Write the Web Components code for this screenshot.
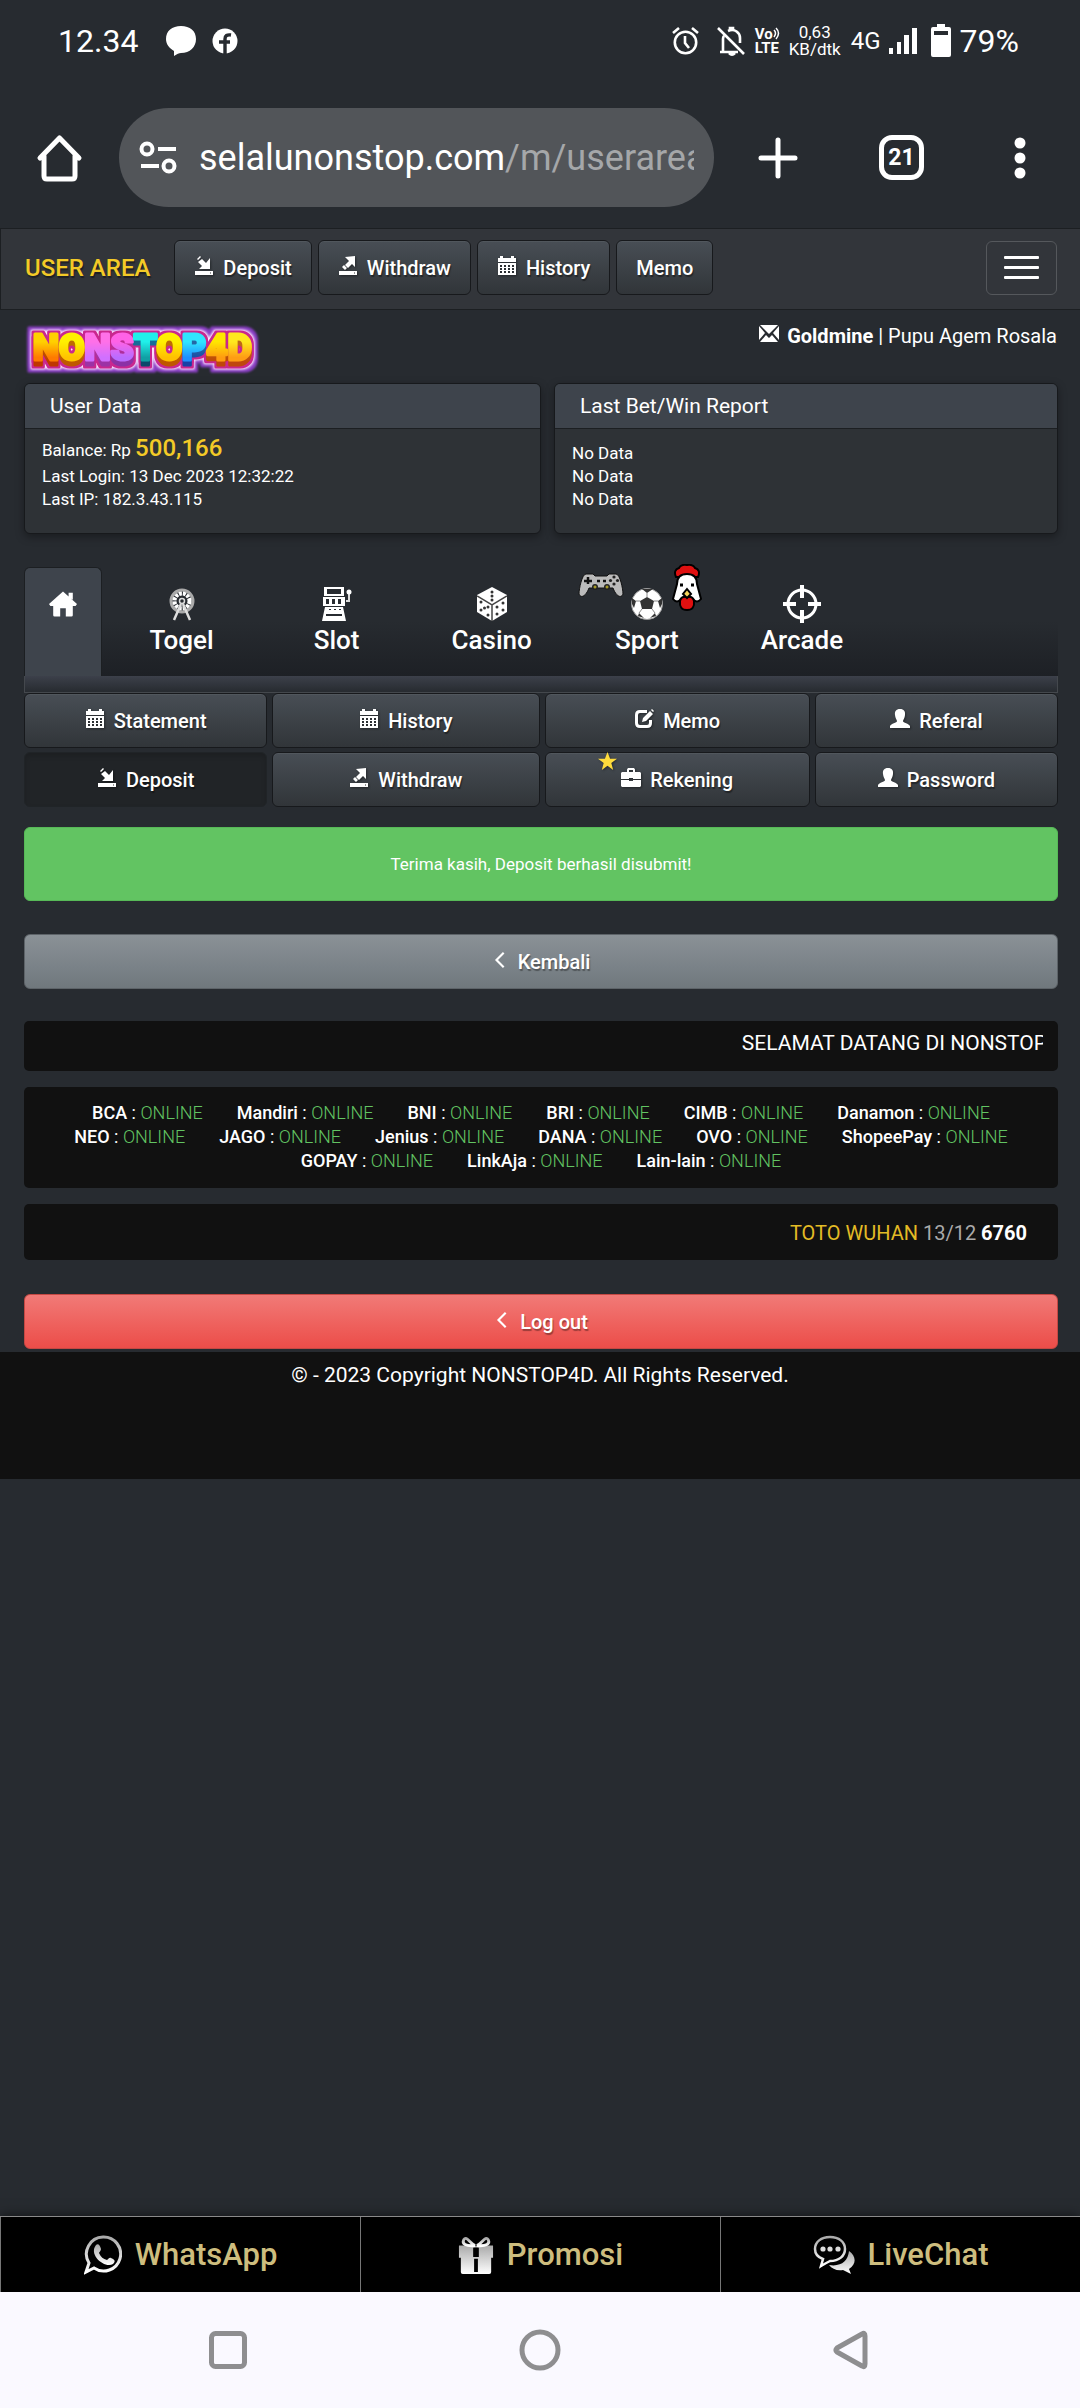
<!DOCTYPE html>
<html lang="id">
<head>
<meta charset="utf-8">
<meta name="viewport" content="width=device-width, initial-scale=1">
<title>User Area</title>
<style>
  body {
    margin: 0;
    min-height: 100vh;
    display: flex;
    flex-direction: column;
    background: #272b30;
    color: #fff;
    font-family: Roboto, "Liberation Sans", sans-serif;
    font-size: 20px;
    line-height: 24px;
  }
  main {
    flex: 1;
    display: block;
  }
  .content {
    padding: 0 22px 3px 24px;
  }
  .cards {
    display: grid;
    grid-template-columns: 517fr 504fr;
    gap: 13px;
    margin-bottom: 33px;
  }
  .cards p {
    margin: 0;
  }
  .cards .balance {
    line-height: 30px;
  }
  .balance strong {
    color: #f3ca27;
    font-size: 24px;
    font-weight: 500;
  }
  .cards .report {
    margin-top: 9px;
  }
  .actions {
    display: grid;
    grid-template-columns: 243fr 267fr 265fr 243fr;
    gap: 4px 5px;
    margin-bottom: 20px;
  }
</style>
</head>
<body>
  <status-bar></status-bar>
  <browser-bar></browser-bar>
  <main>
    <user-navbar></user-navbar>
    <user-heading level="Goldmine" name="Pupu Agem Rosala"></user-heading>
    <div class="content">
      <section class="cards">
        <data-card heading="User Data">
          <p class="balance">Balance: Rp <strong>500,166</strong></p>
          <p>Last Login: 13 Dec 2023 12:32:22</p>
          <p>Last IP: 182.3.43.115</p>
        </data-card>
        <data-card heading="Last Bet/Win Report">
          <p class="report">No Data</p>
          <p>No Data</p>
          <p>No Data</p>
        </data-card>
      </section>
      <game-tabs></game-tabs>
      <nav class="actions">
        <action-button icon="calendar">Statement</action-button>
        <action-button icon="calendar">History</action-button>
        <action-button icon="edit">Memo</action-button>
        <action-button icon="user">Referal</action-button>
        <action-button icon="save" active>Deposit</action-button>
        <action-button icon="open">Withdraw</action-button>
        <action-button icon="briefcase" starred>Rekening</action-button>
        <action-button icon="user">Password</action-button>
      </nav>
      <alert-box>Terima kasih, Deposit berhasil disubmit!</alert-box>
      <wide-button>Kembali</wide-button>
      <news-ticker>SELAMAT DATANG DI NONSTOP</news-ticker>
      <bank-status></bank-status>
      <draw-result market="TOTO WUHAN" date="13/12" number="6760"></draw-result>
      <wide-button kind="danger">Log out</wide-button>
    </div>
    <page-footer>© - 2023 Copyright NONSTOP4D. All Rights Reserved.</page-footer>
  </main>
  <contact-bar></contact-bar>
  <system-nav></system-nav>

<script>
const icons = {
  save: '<path d="M1 15h18v4H1zM16 2v11H5l3-3-4-4 4-3 4 4zM3 3l3-3 1 1-3 3z"/><path d="M16 17h1" stroke="#333" stroke-width="1"/>',
  open: '<path d="M1 15h18v4H1zM17 0v11l-3-3-4 4-3-3 4-4-4-4zM4 11l2-2 3 3-2 2z"/><path d="M16 17h1" stroke="#333" stroke-width="1"/>',
  calendar: '<path fill-rule="evenodd" d="M1 2h2V0h3v2h8V0h3v2h2v4H1zM1 7h18v12H1zM3 9v2h2V9zm4 0v2h2V9zm4 0v2h2V9zm4 0v2h2V9zM3 12v2h2v-2zm4 0v2h2v-2zm4 0v2h2v-2zm4 0v2h2v-2zM3 15v2h2v-2zm4 0v2h2v-2zm4 0v2h2v-2zm4 0v2h2v-2z"/>',
  edit: '<path d="M13 2.500H6Q2.500 2.500 2.500 6v8q0 3.500 3.500 3.500h7q3.500 0 3.500-3.500v-3" fill="none" stroke="currentColor" stroke-width="3"/><path d="m8 13 1-4 7-7 3 3-7 7zM17 1l1-1 2 2-1 1z"/>',
  user: '<path d="M10 0c4 0 5.500 2.500 5 6-.3 3-1.500 4-2 6 0 2 6 2.500 7 5v2H0v-2c1-2.500 7-3 7-5-.5-2-1.700-3-2-6C4.500 2.500 6 0 10 0z"/>',
  briefcase: '<path fill-rule="evenodd" d="M6 4V1.500L7 0h6l1 1.500V4h5l1 1v6h-8v-1H8v1H0V5l1-1zM8 4h4V2H8zM0 12h8v1h4v-1h8v6l-1 1H1l-1-1z"/>',
  mail: '<path d="M1 1h18l-9 9zM0 2l6 7-6 7zM20 2v14l-6-7zM1 18l6-7 3 3 3-3 6 7z"/>',
  home: '<path d="M10 1 20 10l-1 1.500h-2V18q0 1-1 1h-4v-6H8v6H4q-1 0-1-1v-6.500H1L0 10zM14 2h3v5l-3-2z"/>',
  chevron: '<path d="m13 2-8 8 8 8" fill="none" stroke="currentColor" stroke-width="2.400"/>',
  star: '<path fill="#ffdc3c" d="m10 0 2.700 7H20l-6 4.600L16 19l-6-4.400L4 19l2-7.400L0 7h7.300z"/>',
};

const svg = (name, size) => `<svg width="${size}" height="${size}" viewBox="0 0 20 20" fill="currentColor" aria-hidden="true">${icons[name]}</svg>`;

function render(element, html) {
  const template = document.createElement('template');
  template.innerHTML = html;
  element.attachShadow({ mode: 'open' });
  element.shadowRoot.appendChild(template.content.cloneNode(true));
}

class StatusBar extends HTMLElement {
  constructor() {
    super();
    render(this, `
      <style>
        :host {
          display: flex;
          align-items: center;
          height: 82px;
          padding: 0 61px 0 58px;
          font-size: 32px;
          line-height: 40px;
        }
        .time { margin-right: 28px; }
        .chat { margin-right: 16px; }
        .right {
          margin-left: auto;
          display: flex;
          align-items: center;
        }
        .alarm { margin-right: 18px; }
        .bell { margin-right: 10px; }
        .lte, .speed {
          font-size: 15px;
          line-height: 14px;
          font-weight: 700;
        }
        .lte { margin-right: 9px; }
        .lte span { display: flex; }
        .speed {
          font-size: 17px;
          line-height: 17px;
          font-weight: 400;
          text-align: center;
          margin-right: 10px;
        }
        .net {
          font-size: 24px;
          margin-right: 8px;
        }
        .signal { margin-right: 14px; }
        .battery { margin-right: 9px; }
      </style>
      <span class="time">12.34</span>
      <svg class="chat" width="30" height="32" viewBox="0 0 30 32"><path fill="#fff" d="M15 1C24 1 30 6 30 14s-6 14-15 14c-2 0-4 1-7 3v-5C3 23 0 19 0 14 0 6 6 1 15 1z"/></svg>
      <svg width="26" height="28" viewBox="0 0 26 28"><circle cx="13" cy="14" r="12.500" fill="#fff"/><path d="M13 28V12q0-5 6-4M7 15h11" fill="none" stroke="#272b30" stroke-width="3.400"/></svg>
      <span class="right">
        <svg class="alarm" width="27" height="28" viewBox="0 0 27 28" fill="none" stroke="#fff" stroke-width="2.600"><circle cx="13.500" cy="15.500" r="10.700"/><path d="M13 9v7l4 5M1 6l6-5M26 6l-6-5"/></svg>
        <svg class="bell" width="28" height="30" viewBox="0 0 28 30" fill="none" stroke="#fff" stroke-width="2.600"><path d="M3 26h18M6 25V13q0-2 1-3M11 5c7-3 12 2 12 7v5M1 2l26 26"/><path d="M12 27q3 3 6 0M13 4V2h3v2"/></svg>
        <span class="lte"><span>Vo<svg width="7" height="13" viewBox="0 0 7 13" fill="none" stroke="#fff" stroke-width="1.500"><path d="M1 3q3 3 0 7M3 1q5 5 0 11"/></svg></span>LTE</span>
        <span class="speed">0,63<br>KB/dtk</span>
        <span class="net">4G</span>
        <svg class="signal" width="28" height="28" viewBox="0 0 28 28" fill="#fff"><path d="M0 21h4v6H0zM8 15h4v12H8zM15 8h5v19h-5zM23 1h5v26h-5z"/></svg>
        <svg class="battery" width="20" height="34" viewBox="0 0 20 34" fill="#fff"><path fill-rule="evenodd" d="M6 0h8v3h4q2 0 2 2v26q0 2-2 2H2q-2 0-2-2V5q0-2 2-2h4zM3 7v4h14V7z"/></svg>
        <span>79%</span>
      </span>
    `);
  }
}

class BrowserBar extends HTMLElement {
  constructor() {
    super();
    render(this, `
      <style>
        :host {
          display: flex;
          align-items: center;
          padding: 26px 54px 21px 36px;
        }
        button {
          display: flex;
          padding: 0;
          border: 0;
          background: none;
          color: #fff;
        }
        .address {
          flex: 1;
          min-width: 0;
          display: flex;
          align-items: center;
          height: 99px;
          margin: 0 44px 0 36px;
          padding: 0 20px;
          border-radius: 50px;
          background: #525559;
          box-sizing: border-box;
        }
        .url {
          flex: 1;
          overflow: hidden;
          white-space: nowrap;
          margin-left: 22px;
          font-size: 36px;
          line-height: 48px;
          color: #a5a7a9;
        }
        .url b {
          color: #fff;
          font-weight: 400;
        }
        .plus { margin-right: 81px; }
        .tabs {
          width: 45px;
          height: 45px;
          box-sizing: border-box;
          border: 5px solid #fff;
          border-radius: 13px;
          align-items: center;
          justify-content: center;
          font: 700 23px/28px Roboto, sans-serif;
          margin-right: 90px;
        }
      </style>
      <button aria-label="Home"><svg width="47" height="48" viewBox="0 0 47 48" fill="none" stroke="#fff" stroke-width="5" stroke-linejoin="round" stroke-linecap="round"><path d="M4 24 23.500 4 43 24M8 22v20q0 3 3 3h25q3 0 3-3V22"/></svg></button>
      <div class="address">
        <svg width="38" height="34" viewBox="0 0 38 34" fill="none" stroke="#fff" stroke-width="4"><circle cx="8" cy="8" r="5.500"/><circle cx="30" cy="25" r="5.500"/><path d="M19 8h18M2 25h18"/></svg>
        <div class="url"><b>selalunonstop.com</b>/m/userarea</div>
      </div>
      <button class="plus" aria-label="New tab"><svg width="40" height="42" viewBox="0 0 40 42" stroke="#fff" stroke-width="5" stroke-linecap="round"><path d="M3 21h34M20 3v36"/></svg></button>
      <button class="tabs">21</button>
      <button aria-label="More"><svg width="12" height="42" viewBox="0 0 12 42" fill="#fff"><circle cx="6" cy="6" r="5.500"/><circle cx="6" cy="21" r="5.500"/><circle cx="6" cy="36" r="5.500"/></svg></button>
    `);
  }
}

class ActionButton extends HTMLElement {
  constructor() {
    super();
    const icon = this.getAttribute('icon');
    render(this, `
      <style>
        :host {
          display: block;
        }
        a {
          position: relative;
          display: flex;
          align-items: center;
          justify-content: center;
          gap: 9px;
          height: 55px;
          padding: 0 19px;
          box-sizing: border-box;
          border: 1px solid #17191c;
          border-radius: 6px;
          background: linear-gradient(#484e55, #3a3f44 60%, #313539);
          box-shadow: inset 0 1px 0 rgba(255, 255, 255, .05);
          color: #fff;
          font-size: 20px;
          font-weight: 500;
          line-height: 28px;
          text-decoration: none;
          text-shadow: 1px 2px 1px rgba(0, 0, 0, .4);
        }
        :host([active]) a {
          border-color: #202427;
          background: #212427;
          box-shadow: inset 0 3px 5px rgba(0, 0, 0, .15);
        }
        svg {
          margin-bottom: 4px;
          filter: drop-shadow(1px 1px 1px rgba(0, 0, 0, .4));
        }
        .icon {
          position: relative;
          display: flex;
        }
        .star {
          position: absolute;
          right: 24px;
          bottom: 10px;
        }
      </style>
      <a href="#">
        ${icon ? `<span class="icon">${svg(icon, 20)}${this.hasAttribute('starred') ? `<span class="star">${svg('star', 19)}</span>` : ''}</span>` : ''}
        <slot></slot>
      </a>
    `);
  }
}

class UserNavbar extends HTMLElement {
  constructor() {
    super();
    render(this, `
      <style>
        :host {
          display: flex;
          align-items: center;
          gap: 6px;
          padding: 11px 23px 14px 24px;
          border: solid #1c1f22;
          border-width: 1px 0 1px 1px;
          background: #32353a;
        }
        .brand {
          margin-right: 18px;
          color: #f3ca27;
          font-size: 24px;
          font-weight: 500;
          line-height: 28px;
          text-decoration: none;
          text-shadow: 1px 2px 1px rgba(0, 0, 0, .4);
        }
        button {
          display: flex;
          flex-direction: column;
          justify-content: center;
          gap: 7px;
          width: 71px;
          height: 54px;
          margin-left: auto;
          padding: 0 17px;
          box-sizing: border-box;
          border: 1px solid #55585c;
          border-radius: 6px;
          background: none;
        }
        button span {
          width: 100%;
          height: 3px;
          border-radius: 1px;
          background: #fff;
        }
      </style>
      <a class="brand" href="#">USER AREA</a>
      <action-button icon="save">Deposit</action-button>
      <action-button icon="open">Withdraw</action-button>
      <action-button icon="calendar">History</action-button>
      <action-button>Memo</action-button>
      <button aria-label="Menu"><span></span><span></span><span></span></button>
    `);
  }
}

const logoLetters = [
  ['N', '#ffd000', '#ff7a00'], ['O', '#fff000', '#ffc400'], ['N', '#ff70e8', '#d070ff'],
  ['S', '#ff62e6', '#b96cff'], ['T', '#20f0ea', '#10a0a4'], ['O', '#fff000', '#ffc000'],
  ['P', '#30e6ff', '#1f90ff'], ['4', '#ffe600', '#ff9c10'], ['D', '#ffe81e', '#ff9d14'],
];

class SiteLogo extends HTMLElement {
  constructor() {
    super();
    render(this, `
      <style>
        :host { display: block; }
        svg { display: block; }
        text {
          font: 900 37px Roboto, sans-serif;
          stroke-width: 3px;
          stroke-linejoin: round;
          paint-order: stroke;
        }
      </style>
      <svg width="242" height="56" viewBox="0 0 242 56" role="img">
        <defs>
          ${logoLetters.map(([, from, to], i) => `<linearGradient id="fill${i}" gradientUnits="userSpaceOnUse" x1="0" y1="12" x2="0" y2="38"><stop offset=".3" stop-color="${from}"/><stop offset=".9" stop-color="${to}"/></linearGradient>`).join('')}
          <filter id="outline" x="-10%" y="-40%" width="120%" height="180%" color-interpolation-filters="sRGB">
            <feOffset in="SourceAlpha" dy="5" result="low"/>
            <feMerge result="solid"><feMergeNode in="SourceAlpha"/><feMergeNode in="low"/></feMerge>
            <feMorphology in="solid" operator="dilate" radius="2" result="m1"/>
            <feFlood flood-color="#c9278f"/><feComposite in2="m1" operator="in" result="pink"/>
            <feMorphology in="solid" operator="dilate" radius="3" result="m2"/>
            <feGaussianBlur in="m2" stdDeviation="1" result="m2b"/>
            <feFlood flood-color="#ffe6ff"/><feComposite in2="m2b" operator="in" result="white"/>
            <feMorphology in="solid" operator="dilate" radius="6" result="m3"/>
            <feGaussianBlur in="m3" stdDeviation="1" result="m3b"/>
            <feFlood flood-color="#8a3fc4"/><feComposite in2="m3b" operator="in" result="purple"/>
            <feColorMatrix in="SourceGraphic" values=".75 0 0 0 0  0 .45 0 0 0  0 0 .65 0 0  0 0 0 1 0" result="dark"/>
            <feOffset in="dark" dy="5" result="shade"/>
            <feMerge>
              <feMergeNode in="purple"/><feMergeNode in="white"/><feMergeNode in="pink"/>
              <feMergeNode in="shade"/><feMergeNode in="SourceGraphic"/>
            </feMerge>
          </filter>
        </defs>
        <text x="9" y="38" filter="url(#outline)">${logoLetters.map(([letter], i) => `<tspan fill="url(#fill${i})" stroke="url(#fill${i})">${letter}</tspan>`).join('')}</text>
      </svg>
    `);
  }
}

class UserHeading extends HTMLElement {
  constructor() {
    super();
    render(this, `
      <style>
        :host {
          display: flex;
          justify-content: space-between;
          align-items: flex-start;
          padding: 12px 23px 5px 24px;
        }
        .user {
          display: flex;
          align-items: center;
          gap: 8px;
          font-size: 20px;
          line-height: 28px;
        }
        svg { margin-bottom: 4px; }
        strong { font-weight: 700; }
      </style>
      <site-logo></site-logo>
      <div class="user">${svg('mail', 20)}<span><strong>${this.getAttribute('level')}</strong> | ${this.getAttribute('name')}</span></div>
    `);
  }
}

class DataCard extends HTMLElement {
  constructor() {
    super();
    render(this, `
      <style>
        :host {
          display: block;
          min-height: 151px;
          box-sizing: border-box;
          border: 1px solid #17191c;
          border-radius: 6px;
          background: #2e3236;
          box-shadow: 0 3px 8px rgba(0, 0, 0, .35);
          overflow: hidden;
        }
        h2 {
          margin: 0;
          padding: 9px 25px;
          border-bottom: 1px solid #1c1f22;
          background: #3e444c;
          font-size: 21px;
          font-weight: 400;
          line-height: 26px;
        }
        .body {
          padding: 4px 17px 0;
          font-size: 17px;
          line-height: 23px;
        }
      </style>
      <h2>${this.getAttribute('heading')}</h2>
      <div class="body"><slot></slot></div>
    `);
  }
}

const games = [
  ['Togel', `<svg width="26" height="34" viewBox="0 0 26 34" fill="none" stroke="#ddd"><circle cx="13" cy="14" r="11" stroke="#aaa" stroke-width="3"/><circle cx="13" cy="14" r="7.500" stroke="#fff" stroke-width="4" stroke-dasharray="3 1"/><circle cx="13" cy="14" r="2.500" stroke-width="1.500"/><path d="m12 17-7 16M14 17l7 16" stroke-width="2.500"/></svg>`],
  ['Slot', `<svg width="30" height="34" viewBox="0 0 30 34" fill="#fff"><path fill-rule="evenodd" d="M2 0h20v9H2zM5 2v5h14V2zM1 10h22v9H1zM4 12v5h3v-5zm6 0v5h3v-5zm6 0v5h3v-5zM3 20h18l3 14H0zm4 2v1h2v-1zm5 0v1h2v-1zm5 0v1h2v-1zM4 27v2h16v-2z"/><path d="M24 14h3V6" fill="none" stroke="#ddd" stroke-width="2"/><circle cx="27" cy="5" r="2.500"/></svg>`],
  ['Casino', `<svg width="30" height="34" viewBox="0 0 30 34"><path fill="#fff" d="m15 0 15 8v17l-15 9-15-9V8z"/><path d="m0 9 15 9 15-9M15 18v16" fill="none" stroke="#444" stroke-width="1.500"/><g fill="#333"><circle cx="15" cy="5" r="1.500"/><circle cx="15" cy="9" r="1.500"/><circle cx="15" cy="13" r="1.500"/><circle cx="4" cy="15" r="1.500"/><circle cx="11" cy="20" r="1.500"/><circle cx="4" cy="23" r="1.500"/><circle cx="11" cy="28" r="1.500"/><circle cx="7.500" cy="21" r="1.500"/><circle cx="20" cy="20" r="1.500"/><circle cx="26" cy="16" r="1.500"/><circle cx="20" cy="27" r="1.500"/><circle cx="26" cy="23" r="1.500"/></g></svg>`],
  ['Sport', `<svg width="34" height="34" viewBox="0 0 34 34"><circle cx="17" cy="17" r="15.500" fill="#fff" stroke="#999"/><g fill="#333"><path d="m17 10 7 4-2 8H12l-2-8zM12 2h11l-6 4zM2 11l4 3-2 7-2-4zM32 11l-4 3 2 7 2-4zM9 26l5 5-6-2zM25 26l-5 5 6-2z"/></g><path d="M17 6v4M6 14h4M24 14h4M22 22l3 4M12 22l-3 4" stroke="#888"/></svg>`],
  ['Arcade', `<svg width="38" height="38" viewBox="0 0 38 38" fill="none" stroke="#fff"><circle cx="19" cy="19" r="14" stroke-width="3"/><path d="M19 0v13M19 25v13M0 19h13M25 19h13" stroke-width="4"/></svg>`],
];

const extras = `
  <svg class="pad" width="46" height="26" viewBox="0 0 46 26" stroke="#111"><path fill="#bbb" d="M8 2h7l2 2h12l2-2h7c4 0 7 15 7 20-2 5-7 2-10-6h-8-8-8C8 24 3 27 1 22 1 17 4 2 8 2z"/><path d="M10 5v7M6 9h8M19 9h3M25 9h3" stroke-width="2.500"/><g fill="#222" stroke="none"><circle cx="36" cy="5" r="1.600"/><circle cx="36" cy="12" r="1.600"/><circle cx="32.500" cy="8.500" r="1.600"/><circle cx="39.500" cy="8.500" r="1.600"/><circle cx="17" cy="15" r="3"/><circle cx="29" cy="15" r="3"/></g><circle cx="17" cy="15" r="1" stroke="#dc3"/><circle cx="29" cy="15" r="1" stroke="#dc3"/></svg>
  <svg class="hen" width="30" height="48" viewBox="0 0 30 48" stroke="#000" stroke-width="2"><path fill="#e01010" d="M4 13Q1 6 7 4q2-4 8-3 6-1 8 3 6 2 3 9z"/><path fill="#fff" d="M5 20Q5 10 15 10t10 10l4 15q-4 5-8 0H9q-4 5-8 0z"/><path fill="#e01010" d="M8 37q1-5 7-4 6-1 7 4 1 9-7 9t-7-9z"/><path fill="#f5d45c" d="m15 25 4 5-4 4-4-4z"/><path d="M8 21h3M19 21h3" stroke-width="3"/></svg>`;

class GameTabs extends HTMLElement {
  constructor() {
    super();
    render(this, `
      <style>
        :host { display: block; }
        nav {
          display: flex;
          height: 109px;
          background: linear-gradient(#272b30 50%, #1d2025);
        }
        a {
          flex: 0 0 15%;
          display: flex;
          flex-direction: column;
          align-items: center;
          padding-top: 18px;
          box-sizing: border-box;
          color: #fff;
          font-size: 26px;
          font-weight: 500;
          line-height: 30px;
          text-decoration: none;
        }
        .home {
          flex: 0 0 78px;
          margin-right: 2px;
          padding-top: 22px;
          border: 1px solid #1c1f22;
          border-bottom: 0;
          border-radius: 6px 6px 0 0;
          background: #3e444c;
        }
        .icon {
          position: relative;
          display: flex;
          align-items: center;
          height: 38px;
          margin-bottom: 2px;
        }
        .pad, .hen { position: absolute; }
        .pad {
          right: 40px;
          top: -13px;
        }
        .hen {
          left: 42px;
          top: -21px;
        }
        .strip {
          height: 16px;
          border: 1px solid #44484d;
          border-top: 0;
          background: linear-gradient(#3c404a, #272b30);
        }
      </style>
      <nav>
        <a class="home" href="#" aria-label="Home">${svg('home', 28)}</a>
        ${games.map(([name, icon]) => `<a href="#"><span class="icon">${icon}${name === 'Sport' ? extras : ''}</span>${name}</a>`).join('')}
      </nav>
      <div class="strip"></div>
    `);
  }
}

class AlertBox extends HTMLElement {
  constructor() {
    super();
    render(this, `
      <style>
        :host {
          display: block;
          margin-bottom: 33px;
          padding: 24px;
          border: 1px solid #57b957;
          border-radius: 6px;
          background: #62c462;
          font-size: 17px;
          line-height: 24px;
          text-align: center;
        }
      </style>
      <slot></slot>
    `);
  }
}

class WideButton extends HTMLElement {
  constructor() {
    super();
    render(this, `
      <style>
        :host {
          display: block;
          margin-bottom: 32px;
        }
        :host([kind="danger"]) {
          margin-bottom: 0;
        }
        button {
          display: flex;
          align-items: center;
          justify-content: center;
          gap: 8px;
          width: 100%;
          height: 55px;
          border: 1px solid #5d6368;
          border-radius: 6px;
          background: linear-gradient(#8a9196, #7a8288 60%, #70787d);
          color: #fff;
          font: 500 20px/28px Roboto, sans-serif;
          text-shadow: 1px 2px 1px rgba(0, 0, 0, .35);
        }
        :host([kind="danger"]) button {
          border-color: #c54843;
          background: linear-gradient(#f17a77, #ee5f5b 60%, #ec4d49);
        }
        svg { margin-bottom: 4px; }
      </style>
      <button>${svg('chevron', 18)}<slot></slot></button>
    `);
  }
}

class NewsTicker extends HTMLElement {
  constructor() {
    super();
    render(this, `
      <style>
        :host {
          display: flex;
          justify-content: flex-end;
          margin-bottom: 16px;
          padding: 8px 15px 14px;
          border-radius: 5px;
          background: #111;
          font-size: 21px;
          line-height: 28px;
        }
        div {
          width: 30%;
          overflow: hidden;
          white-space: nowrap;
        }
      </style>
      <div><slot></slot></div>
    `);
  }
}

const banks = [
  ['BCA', 'Mandiri', 'BNI', 'BRI', 'CIMB', 'Danamon'],
  ['NEO', 'JAGO', 'Jenius', 'DANA', 'OVO', 'ShopeePay'],
  ['GOPAY', 'LinkAja', 'Lain-lain'],
];

class BankStatus extends HTMLElement {
  constructor() {
    super();
    render(this, `
      <style>
        :host {
          display: block;
          margin-bottom: 16px;
          padding: 14px 14px 15px;
          border-radius: 5px;
          background: #111;
          font-size: 18px;
          line-height: 24px;
        }
        .line {
          display: flex;
          justify-content: center;
          gap: 34px;
        }
        strong { font-weight: 500; }
        .online { color: #62c462; font-weight: 300; }
      </style>
      ${banks.map(line => `<div class="line">${line.map(bank => `<span><strong>${bank}</strong> : <span class="online">ONLINE</span></span>`).join('')}</div>`).join('')}
    `);
  }
}

class DrawResult extends HTMLElement {
  constructor() {
    super();
    render(this, `
      <style>
        :host {
          display: block;
          margin-bottom: 34px;
          padding: 15px 31px 13px;
          border-radius: 5px;
          background: #111;
          font-size: 20px;
          line-height: 28px;
          text-align: right;
          color: #aaa;
        }
        .market { color: #e3bb25; }
        strong { color: #fff; }
      </style>
      <span class="market">${this.getAttribute('market')}</span>
      ${this.getAttribute('date')}
      <strong>${this.getAttribute('number')}</strong>
    `);
  }
}

class PageFooter extends HTMLElement {
  constructor() {
    super();
    render(this, `
      <style>
        :host {
          display: block;
          padding: 9px 24px 90px;
          background: #111;
          font-size: 21px;
          line-height: 28px;
          text-align: center;
        }
      </style>
      <slot></slot>
    `);
  }
}

class ContactBar extends HTMLElement {
  constructor() {
    super();
    const fade = '<defs><linearGradient id="fade" x1="0" y1="0" x2="0" y2="1"><stop stop-color="#aaa"/><stop offset="1" stop-color="#fff"/></linearGradient></defs>';
    render(this, `
      <style>
        :host {
          display: flex;
          border-top: 1px solid #8a8a8a;
          background: #000;
          box-shadow: 0 0 12px rgba(0, 0, 0, .6);
        }
        a {
          flex: 1;
          display: flex;
          align-items: center;
          justify-content: center;
          gap: 13px;
          height: 75px;
          border-left: 1px solid #777;
          color: #cdbd7e;
          font-size: 31px;
          font-weight: 500;
          line-height: 40px;
          text-decoration: none;
        }
      </style>
      <a href="#"><svg width="38" height="40" viewBox="0 0 38 40">${fade}<path d="M19 2a17 17 0 1 1-9 31l-8 4 3-9A17 17 0 0 1 19 2z" fill="none" stroke="url(#fade)" stroke-width="3"/><path fill="url(#fade)" d="M12 10c2-2 4 0 5 4 0 2-2 3-2 4 2 4 4 6 8 7 1 0 2-3 4-2 5 2 4 4 2 6-8 5-25-9-17-19z"/></svg>WhatsApp</a>
      <a href="#"><svg width="36" height="40" viewBox="0 0 38 42">${fade}<path fill="url(#fade)" d="M1 11h36v13h-2v15q0 2-2 2H5q-2 0-2-2V24H1zM16 13v10h6V13zM17 25v14h4V25z" fill-rule="evenodd"/><path d="M18 11C12 8 9 0 6 5c-2 4 2 7 12 6M20 11c6-3 9-11 12-6 2 4-2 7-12 6" fill="none" stroke="url(#fade)" stroke-width="3"/></svg>Promosi</a>
      <a href="#"><svg width="42" height="40" viewBox="0 0 42 40">${fade}<path d="M17 2c9 0 15 5 15 12s-6 12-15 12q-4 2-9 5l2-7C4 22 2 18 2 14 2 7 8 2 17 2z" fill="none" stroke="url(#fade)" stroke-width="2.500"/><path fill="url(#fade)" d="M36 16c7 5 8 13 0 18l2 5-8-4c-6 1-11-1-14-5 12 2 19-4 20-14z"/><g fill="#ddd"><circle cx="10" cy="14" r="2.600"/><circle cx="17" cy="14" r="2.600"/><circle cx="25" cy="14" r="2.600"/></g></svg>LiveChat</a>
    `);
  }
}

class SystemNav extends HTMLElement {
  constructor() {
    super();
    render(this, `
      <style>
        :host {
          display: flex;
          justify-content: space-around;
          align-items: center;
          height: 116px;
          padding: 0 72px;
          box-sizing: border-box;
          background: #faf9ff;
        }
        button {
          display: flex;
          padding: 0;
          border: 0;
          background: none;
        }
        svg {
          fill: none;
          stroke: #8e8e90;
          stroke-width: 5px;
          stroke-linejoin: round;
        }
      </style>
      <button aria-label="Recent"><svg width="42" height="42" viewBox="0 0 42 42"><rect x="4.500" y="4.500" width="33" height="33" rx="4"/></svg></button>
      <button aria-label="Home"><svg width="42" height="42" viewBox="0 0 42 42"><circle cx="21" cy="21" r="18"/></svg></button>
      <button aria-label="Back"><svg width="42" height="42" viewBox="0 0 42 42"><path d="M31 5q3-2 3 2v28q0 4-3 2L6 23q-2-2 0-4z"/></svg></button>
    `);
  }
}

window.customElements.define('status-bar', StatusBar);
window.customElements.define('browser-bar', BrowserBar);
window.customElements.define('action-button', ActionButton);
window.customElements.define('user-navbar', UserNavbar);
window.customElements.define('site-logo', SiteLogo);
window.customElements.define('user-heading', UserHeading);
window.customElements.define('data-card', DataCard);
window.customElements.define('game-tabs', GameTabs);
window.customElements.define('alert-box', AlertBox);
window.customElements.define('wide-button', WideButton);
window.customElements.define('news-ticker', NewsTicker);
window.customElements.define('bank-status', BankStatus);
window.customElements.define('draw-result', DrawResult);
window.customElements.define('page-footer', PageFooter);
window.customElements.define('contact-bar', ContactBar);
window.customElements.define('system-nav', SystemNav);
</script>
</body>
</html>
